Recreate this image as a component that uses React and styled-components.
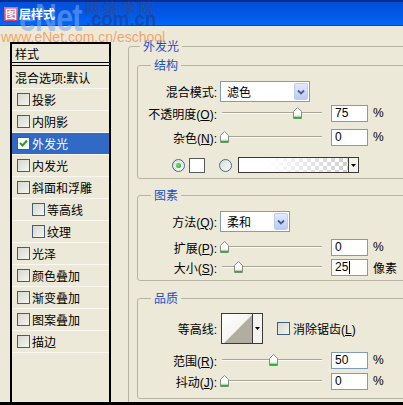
import React from 'react';
import styled, { createGlobalStyle } from 'styled-components';

const GlobalStyle = createGlobalStyle`
  html, body { margin: 0; padding: 0; background: #ECE9D8; }
  body {
    font-family: "Liberation Sans", "Noto Sans CJK SC", sans-serif;
    font-size: 12px;
    color: #000;
  }
  #root { width: 403px; height: 405px; overflow: hidden; }
`;

const FONT = `"Liberation Sans", "Noto Sans CJK SC", sans-serif`;

const Window = styled.div`
  position: relative;
  width: 403px;
  height: 405px;
  box-sizing: border-box;
  overflow: hidden;
  background: #ECE9D8;
  border-bottom: 3px solid #000;
  display: flex;
  flex-direction: column;
`;

const TitleBar = styled.div`
  flex: none;
  height: 26px;
  box-sizing: border-box;
  border-top: 2px solid #0a2c8c;
  border-bottom: 1px solid #0047cc;
  background: linear-gradient(#0050da, #0057e4 45%, #0062f2 85%, #0068f8);
  display: flex;
  align-items: center;
  padding: 1px 0 0 4px;
`;

const TitleText = styled.span`
  position: relative;
  z-index: 1;
  color: #fff;
  font-weight: bold;
  font-size: 12px;
  font-family: "Noto Sans CJK SC", sans-serif;
  line-height: 14px;
`;

const TitleIcon = styled.span`
  display: inline-block;
  background: linear-gradient(#ea6a8c, #cf3f6c);
  padding: 0 1px;
  margin-right: 1px;
`;

const Watermark = styled.div`
  position: absolute;
  left: 0;
  top: 0;
  width: 170px;
  height: 46px;
  pointer-events: none;
`;

const LogoBig = styled.span`
  position: absolute;
  left: 19px;
  top: -1px;
  font: bold 38px/38px "Liberation Sans", sans-serif;
  color: rgba(125, 168, 240, 0.58);
  transform: scaleX(0.8);
  transform-origin: left top;
  letter-spacing: -1px;
`;

const LogoCn = styled.span`
  position: absolute;
  left: 85px;
  top: 0px;
  font: bold 15px/16px "Noto Sans CJK SC", sans-serif;
  letter-spacing: 3px;
  color: rgba(60, 72, 125, 0.55);
`;

const LogoCom = styled.span`
  position: absolute;
  left: 86px;
  top: 9px;
  font: bold 20px/20px "Liberation Sans", sans-serif;
  color: rgba(35, 55, 125, 0.55);
  transform: scaleX(0.93);
  transform-origin: left top;
`;

const Url = styled.span`
  position: absolute;
  left: 1px;
  top: 30px;
  font: 14px/14px "Liberation Sans", sans-serif;
  color: rgba(244, 135, 55, 0.72);
  letter-spacing: 0;
`;

const Body = styled.div`
  flex: 1;
  min-height: 0;
  display: flex;
  align-items: stretch;
  padding: 13px 0 0 10px;
`;

const StyleList = styled.div`
  flex: none;
  width: 101px;
  margin-top: 3px;
  box-sizing: border-box;
  border: 2px solid #000;
  border-bottom: none;
  display: flex;
  flex-direction: column;
  font-family: "Noto Sans CJK SC", sans-serif;
`;

const ListHeader = styled.div`
  height: 18px;
  border-bottom: 1px solid #000;
  display: flex;
  align-items: center;
  padding-left: 3px;
`;

const ListBody = styled.div`
  flex: 1;
  margin-top: 2px;
  border-top: 1px solid #000;
  display: flex;
  flex-direction: column;
`;

const ListRow = styled.div`
  flex: none;
  height: ${p => p.$h || 21}px;
  border-bottom: 1px solid #f8f7f1;
  display: flex;
  align-items: center;
  padding-left: ${p => p.$pl ?? 5}px;
  background: ${p => (p.$sel ? '#316ac5' : 'transparent')};
  color: ${p => (p.$sel ? '#fff' : '#000')};
  white-space: nowrap;
`;

const Box = styled.span`
  flex: none;
  width: 13px;
  height: 13px;
  box-sizing: border-box;
  border: 1px solid #3f5f82;
  background: ${p => (p.$checked ? '#fff' : 'linear-gradient(135deg, #d8d8d2, #f4f4f0)')};
  margin-right: 2px;
  display: flex;
  align-items: center;
  justify-content: center;
`;

const CheckMark = () => (
  <svg width="9" height="9" viewBox="0 0 9 9">
    <path d="M1 4 L3.5 6.5 L8 1.5" fill="none" stroke="#21a121" strokeWidth="2" />
  </svg>
);

const Check = ({ checked }) => (
  <Box $checked={checked}>{checked && <CheckMark />}</Box>
);

const Panel = styled.div`
  flex: none;
  margin-left: 17px;
`;

const Group = styled.fieldset`
  margin: ${p => p.$mt || 0}px 0 0 0;
  padding: 0 ${p => p.$px || 0}px ${p => p.$pb || 0}px;
  min-inline-size: 0;
  width: ${p => p.$w}px;
  height: ${p => (p.$hgt ? p.$hgt + 'px' : 'auto')};
  box-sizing: border-box;
  border: 1px solid #b7b4a4;
  border-radius: 3px;
`;

const Legend = styled.legend`
  margin-left: ${p => p.$ml}px;
  padding: 0 3px;
  height: 14px;
  line-height: 14px;
  font-family: "Noto Sans CJK SC", sans-serif;
  font-size: 12px;
  color: #1d4fbf;
`;

const Row = styled.div`
  display: flex;
  align-items: center;
  height: ${p => p.$h}px;
  margin-top: ${p => p.$mt}px;
  padding-left: ${p => p.$pl || 0}px;
  white-space: nowrap;
`;

const Label = styled.span`
  flex: none;
  width: 79px;
  text-align: right;
  font-family: ${FONT};
`;

const Combo = styled.div`
  flex: none;
  width: ${p => p.$w}px;
  height: 21px;
  margin-left: 3px;
  box-sizing: border-box;
  border: 1px solid #7f9db9;
  background: #fff;
  display: flex;
  align-items: center;
  padding: 0 1px 0 6px;
  font-family: "Noto Sans CJK SC", sans-serif;
`;

const ComboText = styled.span`
  flex: 1;
`;

const ComboButton = styled.span`
  flex: none;
  width: 14px;
  height: 17px;
  box-sizing: border-box;
  border: 1px solid #bccdf5;
  border-radius: 2px;
  background: linear-gradient(#e2eafe, #b8cbf6);
  display: flex;
  align-items: center;
  justify-content: center;
`;

const ComboBox = ({ w, children }) => (
  <Combo $w={w}>
    <ComboText>{children}</ComboText>
    <ComboButton>
      <svg width="8" height="6" viewBox="0 0 8 6">
        <path d="M1 1.5 L4 4.5 L7 1.5" fill="none" stroke="#4d6185" strokeWidth="1.8" />
      </svg>
    </ComboButton>
  </Combo>
);

const SliderBox = styled.div`
  position: relative;
  flex: none;
  width: 106px;
  height: 18px;
  margin-left: 3px;
`;

const Track = styled.div`
  position: absolute;
  left: 2px;
  right: 4px;
  top: 8px;
  border-top: 1px solid #a8a698;
  border-bottom: 1px solid #fbfaf6;
`;

const ThumbSvg = styled.svg`
  position: absolute;
  top: 3px;
`;

const Slider = ({ pos }) => (
  <SliderBox>
    <Track />
    <ThumbSvg width="9" height="13" viewBox="0 0 9 13" style={{ left: Math.round(pos * 97) }}>
      <path d="M0.5 4.5 L4.5 0.5 L8.5 4.5 V11.5 H0.5 Z" fill="#fff" stroke="#8a8a8a" />
      <path d="M1 10.5 H8" stroke="#28b028" strokeWidth="2" />
      <path d="M1.5 9 H7.5" stroke="#bfe8bf" strokeWidth="1" />
    </ThumbSvg>
  </SliderBox>
);

const Field = styled.span`
  flex: none;
  width: 37px;
  height: 17px;
  margin-left: 5px;
  box-sizing: border-box;
  border: 1px solid #7f9db9;
  background: #fff;
  display: flex;
  align-items: center;
  padding-left: 3px;
  font-family: ${FONT};
`;

const Caret = styled.span`
  display: inline-block;
  width: 1px;
  height: 13px;
  margin-left: 1px;
  background: #000;
`;

const Unit = styled.span`
  margin-left: 5px;
  font-family: ${FONT};
`;

const Radio = styled.span`
  flex: none;
  width: 13px;
  height: 13px;
  margin-left: ${p => p.$ml || 0}px;
  box-sizing: border-box;
  border: 1px solid #46698f;
  border-radius: 50%;
  background: linear-gradient(135deg, #dcdcd6, #fbfbf8);
  display: flex;
  align-items: center;
  justify-content: center;
  &::after {
    content: '';
    display: ${p => (p.$on ? 'block' : 'none')};
    width: 5px;
    height: 5px;
    border-radius: 50%;
    background: radial-gradient(circle at 40% 40%, #7de07d, #1c9c1c);
  }
`;

const Swatch = styled.span`
  flex: none;
  width: 16px;
  height: 15px;
  margin-left: 4px;
  box-sizing: border-box;
  border: 1px solid #5a5a5a;
  background: #fff;
`;

const GradientPick = styled.span`
  flex: none;
  width: 121px;
  height: 16px;
  margin-left: 6px;
  box-sizing: border-box;
  border: 1px solid #3a3a3a;
  display: flex;
`;

const GradientFill = styled.span`
  flex: 1;
  background:
    linear-gradient(to right, #fff 25%, rgba(255, 255, 255, 0) 100%),
    repeating-conic-gradient(#cfcfcf 0 25%, #fff 0 50%) 0 0 / 8px 8px;
`;

const DropStrip = styled.span`
  flex: none;
  width: 10px;
  box-sizing: border-box;
  border-left: 1px solid #3a3a3a;
  background: #f4f3ee;
  display: flex;
  align-items: center;
  justify-content: center;
`;

const Tri = () => (
  <svg width="5" height="3" viewBox="0 0 5 3">
    <path d="M0 0 H5 L2.5 3 Z" fill="#000" />
  </svg>
);

const ContourBox = styled.span`
  flex: none;
  width: 42px;
  height: 31px;
  margin-left: 4px;
  box-sizing: border-box;
  border: 1px solid #3a3a3a;
  display: flex;
  background: #fff;
`;

const ContourPreview = styled.svg`
  flex: 1;
  display: block;
`;

const CheckLabel = styled.span`
  margin-left: 1px;
  font-family: ${FONT};
`;

const Spacer = styled.span`
  margin-left: ${p => p.$ml}px;
  display: flex;
`;

const listItems = [
  { t: '投影' },
  { t: '内阴影' },
  { t: '外发光', sel: true },
  { t: '内发光' },
  { t: '斜面和浮雕' },
  { t: '等高线', sub: true },
  { t: '纹理', sub: true },
  { t: '光泽' },
  { t: '颜色叠加' },
  { t: '渐变叠加' },
  { t: '图案叠加' },
  { t: '描边' },
];

export default function App() {
  return (
    <>
      <GlobalStyle />
      <Window>
        <TitleBar>
          <TitleText>
            <TitleIcon>图</TitleIcon>层样式
          </TitleText>
        </TitleBar>
        <Body>
          <StyleList>
            <ListHeader>样式</ListHeader>
            <ListBody>
              <ListRow $h={22} $pl={3}>混合选项:默认</ListRow>
              {listItems.map(it => (
                <ListRow key={it.t} $sel={it.sel} $pl={it.sub ? 20 : 5}>
                  <Check checked={it.sel} />
                  {it.t}
                </ListRow>
              ))}
            </ListBody>
          </StyleList>

          <Panel>
            <Group $w={290} $px={8} $hgt={400}>
              <Legend $ml={3}>外发光</Legend>

              <Group $w={272} $mt={5} $pb={5}>
                <Legend $ml={13}>结构</Legend>
                <Row $h={21} $mt={9}>
                  <Label>混合模式:</Label>
                  <ComboBox w={90}>滤色</ComboBox>
                </Row>
                <Row $h={18} $mt={2}>
                  <Label>不透明度(<u>O</u>):</Label>
                  <Slider pos={0.75} />
                  <Field>75</Field>
                  <Unit>%</Unit>
                </Row>
                <Row $h={18} $mt={6}>
                  <Label>杂色(<u>N</u>):</Label>
                  <Slider pos={0} />
                  <Field>0</Field>
                  <Unit>%</Unit>
                </Row>
                <Row $h={16} $mt={11} $pl={34}>
                  <Radio $on />
                  <Swatch />
                  <Radio $ml={14} />
                  <GradientPick>
                    <GradientFill />
                    <DropStrip><Tri /></DropStrip>
                  </GradientPick>
                </Row>
              </Group>

              <Group $w={272} $mt={9} $pb={4}>
                <Legend $ml={13}>图素</Legend>
                <Row $h={21} $mt={9}>
                  <Label>方法(<u>Q</u>):</Label>
                  <ComboBox w={70}>柔和</ComboBox>
                </Row>
                <Row $h={18} $mt={6}>
                  <Label>扩展(<u>P</u>):</Label>
                  <Slider pos={0} />
                  <Field>0</Field>
                  <Unit>%</Unit>
                </Row>
                <Row $h={18} $mt={2}>
                  <Label>大小(<u>S</u>):</Label>
                  <Slider pos={0.145} />
                  <Field>25<Caret /></Field>
                  <Unit>像素</Unit>
                </Row>
              </Group>

              <Group $w={272} $mt={10} $pb={8}>
                <Legend $ml={13}>品质</Legend>
                <Row $h={31} $mt={8}>
                  <Label>等高线:</Label>
                  <ContourBox>
                    <ContourPreview viewBox="0 0 29 29" preserveAspectRatio="none">
                      <defs>
                        <linearGradient id="cg" x1="0" y1="0" x2="1" y2="1">
                          <stop offset="0" stopColor="#ffffff" />
                          <stop offset="1" stopColor="#ecebe6" />
                        </linearGradient>
                      </defs>
                      <rect x="0" y="0" width="29" height="29" fill="url(#cg)" />
                      <path d="M2 29 L29 1 L29 29 Z" fill="#b2ae9f" />
                    </ContourPreview>
                    <DropStrip><Tri /></DropStrip>
                  </ContourBox>
                  <Spacer $ml={14}><Check /></Spacer>
                  <CheckLabel>消除锯齿(<u>L</u>)</CheckLabel>
                </Row>
                <Row $h={18} $mt={7}>
                  <Label>范围(<u>R</u>):</Label>
                  <Slider pos={0.5} />
                  <Field>50</Field>
                  <Unit>%</Unit>
                </Row>
                <Row $h={18} $mt={3}>
                  <Label>抖动(<u>J</u>):</Label>
                  <Slider pos={0} />
                  <Field>0</Field>
                  <Unit>%</Unit>
                </Row>
              </Group>
            </Group>
          </Panel>
        </Body>
        <Watermark>
          <LogoBig>eNet</LogoBig>
          <LogoCn>网络学院</LogoCn>
          <LogoCom>.com.cn</LogoCom>
          <Url>www.eNet.com.cn/eschool</Url>
        </Watermark>
      </Window>
    </>
  );
}
